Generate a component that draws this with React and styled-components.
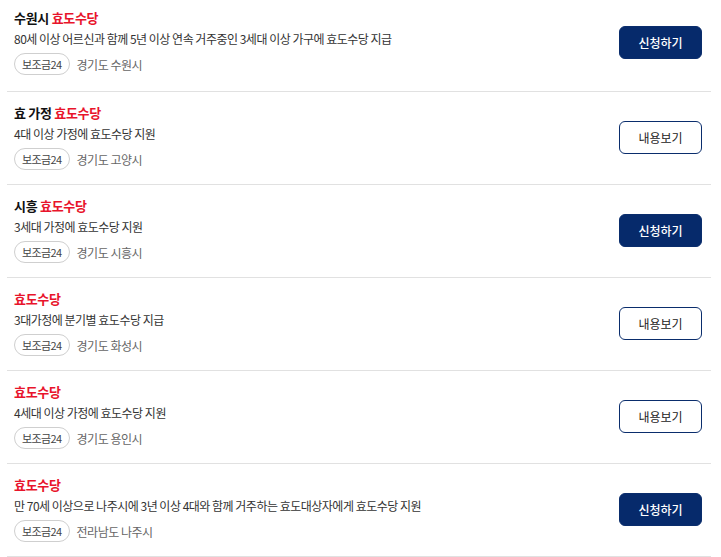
import React from "react";
import styled, { createGlobalStyle } from "styled-components";

const Global = createGlobalStyle`
  html, body { margin: 0; padding: 0; background: #fff; }
  body { font-family: "Noto Sans CJK KR", "Noto Sans", sans-serif; color: #222; }
`;

const List = styled.ul`
  list-style: none;
  margin: 0 10px 0 7px;
  padding: 0;
`;

const Row = styled.li`
  display: flex;
  align-items: center;
  justify-content: space-between;
  padding: 12px 9px 14px 7px;
  border-bottom: 1px solid #e1e1e1;
  &:first-child { padding-top: 9px; padding-bottom: 16px; }
`;

const Info = styled.div`
  display: flex;
  flex-direction: column;
  min-width: 0;
`;

const Title = styled.div`
  font-size: 13px;
  font-weight: 700;
  line-height: 18px;
  letter-spacing: -0.3px;
  color: #111;
`;

const Hl = styled.span`
  color: #e8142b;
`;

const Desc = styled.div`
  margin-top: 3px;
  font-size: 12px;
  line-height: 18px;
  letter-spacing: -0.5px;
  color: #333;
`;

const Meta = styled.div`
  margin-top: 5px;
  display: flex;
  align-items: center;
  gap: 7px;
`;

const Pill = styled.span`
  box-sizing: border-box;
  height: 22px;
  padding: 0 7px;
  border: 1px solid #cfcfcf;
  border-radius: 11px;
  font-size: 11px;
  line-height: 20px;
  letter-spacing: -0.6px;
  color: #444;
`;

const Region = styled.span`
  font-size: 12px;
  letter-spacing: -0.5px;
  color: #666;
`;

const Btn = styled.button`
  box-sizing: border-box;
  flex: none;
  width: 83px;
  height: 33px;
  border-radius: 6px;
  font-family: inherit;
  font-size: 12px;
  cursor: pointer;
  border: 1px solid #0a2d6c;
  background: ${(p) => (p.$primary ? "#062a6b" : "#fff")};
  color: ${(p) => (p.$primary ? "#fff" : "#222")};
  font-weight: ${(p) => (p.$primary ? 500 : 400)};
`;

const items = [
  { pre: "수원시 ", desc: "80세 이상 어르신과 함께 5년 이상 연속 거주중인 3세대 이상 가구에 효도수당 지급", region: "경기도 수원시", apply: true },
  { pre: "효 가정 ", desc: "4대 이상 가정에 효도수당 지원", region: "경기도 고양시", apply: false },
  { pre: "시흥 ", desc: "3세대 가정에 효도수당 지원", region: "경기도 시흥시", apply: true },
  { pre: "", desc: "3대가정에 분기별 효도수당 지급", region: "경기도 화성시", apply: false },
  { pre: "", desc: "4세대 이상 가정에 효도수당 지원", region: "경기도 용인시", apply: false },
  { pre: "", desc: "만 70세 이상으로 나주시에 3년 이상 4대와 함께 거주하는 효도대상자에게 효도수당 지원", region: "전라남도 나주시", apply: true },
];

export default function App() {
  return (
    <>
      <Global />
      <List>
        {items.map((it, i) => (
          <Row key={i}>
            <Info>
              <Title>
                {it.pre}
                <Hl>효도수당</Hl>
              </Title>
              <Desc>{it.desc}</Desc>
              <Meta>
                <Pill>보조금24</Pill>
                <Region>{it.region}</Region>
              </Meta>
            </Info>
            <Btn $primary={it.apply}>{it.apply ? "신청하기" : "내용보기"}</Btn>
          </Row>
        ))}
      </List>
    </>
  );
}
